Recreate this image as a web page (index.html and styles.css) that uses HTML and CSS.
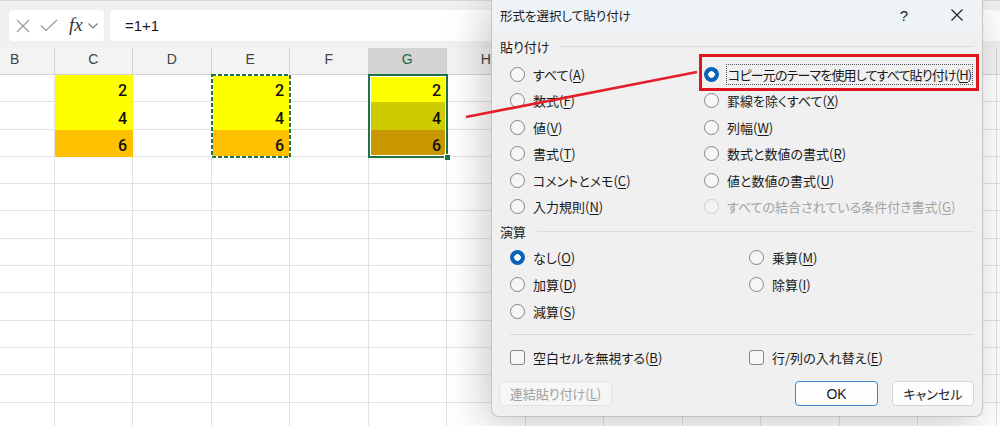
FILE: index.html
```html
<!DOCTYPE html>
<html lang="ja">
<head>
<meta charset="utf-8">
<title>形式を選択して貼り付け</title>
<link rel="stylesheet" href="styles.css">
</head>
<body>
<div class="app">
  <div class="topbar">
    <div class="fxbox">
      <svg class="ic-x" width="14" height="14" viewBox="0 0 14 14"><path d="M1 1L13 13M13 1L1 13" stroke="#9a9a9a" stroke-width="1.2" fill="none"/></svg>
      <svg class="ic-ok" width="18" height="13" viewBox="0 0 18 13"><path d="M1 6.5L6 11.5L17 1" stroke="#9a9a9a" stroke-width="1.2" fill="none"/></svg>
      <span class="fx">fx</span>
      <svg class="ic-chev" width="10" height="6" viewBox="0 0 10 6"><path d="M0.5 0.5L5 5L9.5 0.5" stroke="#777" stroke-width="1.1" fill="none"/></svg>
    </div>
    <div class="formula">=1+1</div>
  </div>

  <div class="sheet">
    <div class="row hdr">
      <span>B</span><span>C</span><span>D</span><span>E</span><span>F</span><span class="sel">G</span><span>H</span><span></span><span></span><span></span><span></span><span></span><span></span><span></span>
    </div>
    <div class="row"><span></span><span class="cell yel">2</span><span></span><span class="cell yel">2</span><span></span><span class="cell yel">2</span><span></span><span></span><span></span><span></span><span></span><span></span><span></span><span></span></div>
    <div class="row"><span></span><span class="cell yel">4</span><span></span><span class="cell yel">4</span><span></span><span class="cell olive">4</span><span></span><span></span><span></span><span></span><span></span><span></span><span></span><span></span></div>
    <div class="row"><span></span><span class="cell org">6</span><span></span><span class="cell org">6</span><span></span><span class="cell gold">6</span><span></span><span></span><span></span><span></span><span></span><span></span><span></span><span></span></div>
    <div class="row"><span></span><span></span><span></span><span></span><span></span><span></span><span></span><span></span><span></span><span></span><span></span><span></span><span></span><span></span></div>
    <div class="row"><span></span><span></span><span></span><span></span><span></span><span></span><span></span><span></span><span></span><span></span><span></span><span></span><span></span><span></span></div>
    <div class="row"><span></span><span></span><span></span><span></span><span></span><span></span><span></span><span></span><span></span><span></span><span></span><span></span><span></span><span></span></div>
    <div class="row"><span></span><span></span><span></span><span></span><span></span><span></span><span></span><span></span><span></span><span></span><span></span><span></span><span></span><span></span></div>
    <div class="row"><span></span><span></span><span></span><span></span><span></span><span></span><span></span><span></span><span></span><span></span><span></span><span></span><span></span><span></span></div>
    <div class="row"><span></span><span></span><span></span><span></span><span></span><span></span><span></span><span></span><span></span><span></span><span></span><span></span><span></span><span></span></div>
    <div class="row"><span></span><span></span><span></span><span></span><span></span><span></span><span></span><span></span><span></span><span></span><span></span><span></span><span></span><span></span></div>
    <div class="row"><span></span><span></span><span></span><span></span><span></span><span></span><span></span><span></span><span></span><span></span><span></span><span></span><span></span><span></span></div>
    <div class="row"><span></span><span></span><span></span><span></span><span></span><span></span><span></span><span></span><span></span><span></span><span></span><span></span><span></span><span></span></div>
    <div class="row"><span></span><span></span><span></span><span></span><span></span><span></span><span></span><span></span><span></span><span></span><span></span><span></span><span></span><span></span></div>

    <svg class="ants" width="80" height="84" viewBox="0 0 80 84"><rect x="1" y="1" width="78" height="82" fill="none" stroke="#fff" stroke-width="2"/><rect x="1" y="1" width="78" height="82" fill="none" stroke="#1f7244" stroke-width="2" stroke-dasharray="4 2"/></svg>
    <div class="selbox"><span class="handle"></span></div>
  </div>

  <div class="dialog">
    <div class="titlebar">
      <span class="title">形式を選択して貼り付け</span>
      <span class="help">?</span>
      <svg class="close" width="12" height="12" viewBox="0 0 12 12"><path d="M0.5 0.5L11.5 11.5M11.5 0.5L0.5 11.5" stroke="#222" stroke-width="1.2" fill="none"/></svg>
    </div>
    <div class="dbody">
      <div class="legend"><span>貼り付け</span></div>
      <div class="opts paste">
        <div class="opt"><span class="radio"></span><span>すべて(<u>A</u>)</span></div>
        <div class="opt"><span class="radio on"></span><span class="focus">コピー元のテーマを使用してすべて貼り付け(<u>H</u>)</span></div>
        <div class="opt"><span class="radio"></span><span>数式(<u>F</u>)</span></div>
        <div class="opt"><span class="radio"></span><span>罫線を除くすべて(<u>X</u>)</span></div>
        <div class="opt"><span class="radio"></span><span>値(<u>V</u>)</span></div>
        <div class="opt"><span class="radio"></span><span>列幅(<u>W</u>)</span></div>
        <div class="opt"><span class="radio"></span><span>書式(<u>T</u>)</span></div>
        <div class="opt"><span class="radio"></span><span>数式と数値の書式(<u>R</u>)</span></div>
        <div class="opt"><span class="radio"></span><span>コメントとメモ(<u>C</u>)</span></div>
        <div class="opt"><span class="radio"></span><span>値と数値の書式(<u>U</u>)</span></div>
        <div class="opt"><span class="radio"></span><span>入力規則(<u>N</u>)</span></div>
        <div class="opt disabled"><span class="radio"></span><span>すべての結合されている条件付き書式(<u>G</u>)</span></div>
      </div>
      <div class="legend calc"><span>演算</span></div>
      <div class="opts ops">
        <div class="opt"><span class="radio on"></span><span>なし(<u>O</u>)</span></div>
        <div class="opt"><span class="radio"></span><span>乗算(<u>M</u>)</span></div>
        <div class="opt"><span class="radio"></span><span>加算(<u>D</u>)</span></div>
        <div class="opt"><span class="radio"></span><span>除算(<u>I</u>)</span></div>
        <div class="opt"><span class="radio"></span><span>減算(<u>S</u>)</span></div>
      </div>
      <div class="sep"></div>
      <div class="opts checks">
        <div class="opt"><span class="check"></span><span>空白セルを無視する(<u>B</u>)</span></div>
        <div class="opt"><span class="check"></span><span>行/列の入れ替え(<u>E</u>)</span></div>
      </div>
      <div class="buttons">
        <span class="btn link">連結貼り付け(<u>L</u>)</span>
        <span class="spacer"></span>
        <span class="btn ok">OK</span>
        <span class="btn cancel">キャンセル</span>
      </div>
    </div>
  </div>

  <svg class="arrow" width="1000" height="426" viewBox="0 0 1000 426"><line x1="466" y1="117" x2="697" y2="72" stroke="#e51f29" stroke-width="2.6"/></svg>
  <div class="annot-box"></div>
</div>
</body>
</html>
```

FILE: styles.css
```css
* { box-sizing: border-box; }
html, body { margin: 0; padding: 0; }
body {
  width: 1000px;
  height: 426px;
  overflow: hidden;
  background: #fff;
  font-family: "Liberation Sans", "Noto Sans CJK JP", sans-serif;
  color: #1a1a1a;
}
.app {
  position: relative;
  width: 1000px;
  height: 426px;
  overflow: hidden;
}

/* formula bar */
.topbar {
  height: 48px;
  background: #f0f0f0;
  border-top: 1px solid #d9d9d9;
  display: flex;
  align-items: flex-start;
  gap: 6px;
  padding: 9px 0 0 9px;
}
.fxbox {
  width: 95px;
  height: 31px;
  background: #fff;
  border-radius: 4px;
  display: flex;
  align-items: center;
  padding-left: 7px;
}
.ic-ok { margin-left: 10px; }
.fx {
  margin-left: 11px;
  font-family: "Liberation Serif", serif;
  font-style: italic;
  font-size: 19px;
  color: #333;
  line-height: 1;
  margin-top: -2px;
}
.ic-chev { margin-left: 5px; }
.formula {
  flex: 1;
  height: 31px;
  background: #fff;
  border-radius: 4px;
  padding-left: 15px;
  display: flex;
  align-items: center;
  font-size: 15px;
  color: #1a1a1a;
}

/* sheet */
.sheet {
  position: relative;
  margin-left: -24px;
}
.row {
  display: flex;
  height: 27.3px;
}
.row > span {
  flex: 0 0 78.5px;
  border-right: 1px solid #e1e1e1;
  border-bottom: 1px solid #e1e1e1;
}
.row.hdr {
  height: 27px;
  background: #f3f3f3;
}
.row.hdr > span {
  border-right-color: #d2d2d2;
  border-bottom-color: #d4d4d4;
  display: flex;
  justify-content: center;
  align-items: center;
  padding-bottom: 4px;
  font-size: 14px;
  color: #444;
}
.row.hdr > span.sel {
  background: #d3d3d3;
  color: #1d6b40;
}
.cell {
  display: flex;
  justify-content: flex-end;
  align-items: flex-end;
  padding: 0 5px 2px 0;
  font-family: Roboto, "Liberation Sans", sans-serif;
  font-weight: 500;
  font-size: 16px;
  line-height: 1;
  color: #111;
}
.row > span.cell { border-color: transparent; }
.yel { background: #ffff00; }
.org { background: #ffc000; }
.olive { background: #cccc00; }
.gold { background: #c99700; }

.ants {
  position: absolute;
  left: 234.5px;
  top: 26px;
}
.selbox {
  position: absolute;
  left: 392px;
  top: 26px;
  width: 79.5px;
  height: 84px;
  border: 2px solid #1f7244;
  box-shadow: inset 0 0 0 1px #fff;
}
.handle {
  position: absolute;
  right: -5px;
  bottom: -5px;
  width: 7px;
  height: 7px;
  background: #1f7244;
  border: 1px solid #fff;
}

/* dialog */
.dialog {
  position: absolute;
  left: 491px;
  top: 0;
  width: 492px;
  height: 417px;
  background: #f0f0f0;
  border: 1px solid #c4c4c4;
  border-top: none;
  border-radius: 0 0 8px 8px;
  box-shadow: -6px 6px 40px rgba(0, 0, 0, 0.22);
  font-family: "Noto Sans CJK JP", sans-serif;
  font-feature-settings: "palt";
  font-size: 13px;
  color: #1a1a1a;
}
.titlebar {
  height: 30px;
  background: #eef3f8;
  display: flex;
  align-items: center;
  padding-left: 8px;
}
.title {
  flex: 1;
  font-size: 12.5px;
}
.help {
  font-family: "Liberation Sans", sans-serif;
  font-size: 15px;
  color: #222;
  margin-right: 43px;
}
.close { margin-right: 19px; }

.dbody {
  padding: 8px 8px 10px 8px;
}
.legend {
  display: flex;
  align-items: center;
  gap: 9px;
  height: 17px;
  line-height: 17px;
}
.legend::after {
  content: "";
  flex: 1;
  height: 1px;
  background: #dcdcdc;
}
.legend.calc { margin-top: 3px; gap: 11px; }

.opts {
  display: grid;
  margin-left: 10px;
}
.paste {
  margin-top: 6px;
  grid-template-columns: 194px 1fr;
  grid-auto-rows: 26.5px;
}
.ops {
  margin-top: 4px;
  grid-template-columns: 239px 1fr;
  grid-auto-rows: 27px;
}
.checks {
  margin-top: 12px;
  grid-template-columns: 239px 1fr;
  grid-auto-rows: 20px;
}
.opt {
  display: flex;
  align-items: center;
  gap: 8px;
  white-space: nowrap;
}
.opt u { text-underline-offset: 2px; }
.radio {
  flex: 0 0 15px;
  width: 15px;
  height: 15px;
  border-radius: 50%;
  border: 1px solid #858585;
  background: #f6f6f6;
}
.radio.on {
  border: none;
  background: radial-gradient(circle, #fff 0 3px, #0a63b8 3.6px);
}
.disabled { color: #a3a3a3; }
.disabled .radio { border-color: #cfcfcf; background: #f3f3f3; }
.focus {
  border: 1px dotted #555;
  padding: 0 1px 0 1px;
  margin-left: -1px;
  line-height: 19px;
  letter-spacing: -0.85px;
}
.check {
  flex: 0 0 15px;
  width: 15px;
  height: 15px;
  border-radius: 3px;
  border: 1px solid #858585;
  background: #f6f6f6;
}
.sep {
  margin: 9px 0 0 10px;
  height: 1px;
  background: #d9d9d9;
}
.buttons {
  margin-top: 14px;
  display: flex;
  gap: 14px;
  align-items: center;
}
.spacer { flex: 1; }
.btn {
  height: 25px;
  border-radius: 4px;
  display: flex;
  align-items: center;
  justify-content: center;
  background: #fdfdfd;
  border: 1px solid #d4d4d4;
}
.btn.link {
  width: 113px;
  margin-left: -1px;
  color: #a0a0a0;
  background: #f6f6f6;
  border-color: #e2e2e2;
}
.btn.ok {
  width: 83px;
  border-color: #3f86c8;
  font-family: "Liberation Sans", sans-serif;
  font-size: 14px;
}
.btn.cancel { width: 82px; }

/* annotations */
.arrow {
  position: absolute;
  left: 0;
  top: 0;
  pointer-events: none;
}
.annot-box {
  position: absolute;
  left: 699px;
  top: 54px;
  width: 280px;
  height: 37px;
  border: 3px solid #e0141e;
}
```
